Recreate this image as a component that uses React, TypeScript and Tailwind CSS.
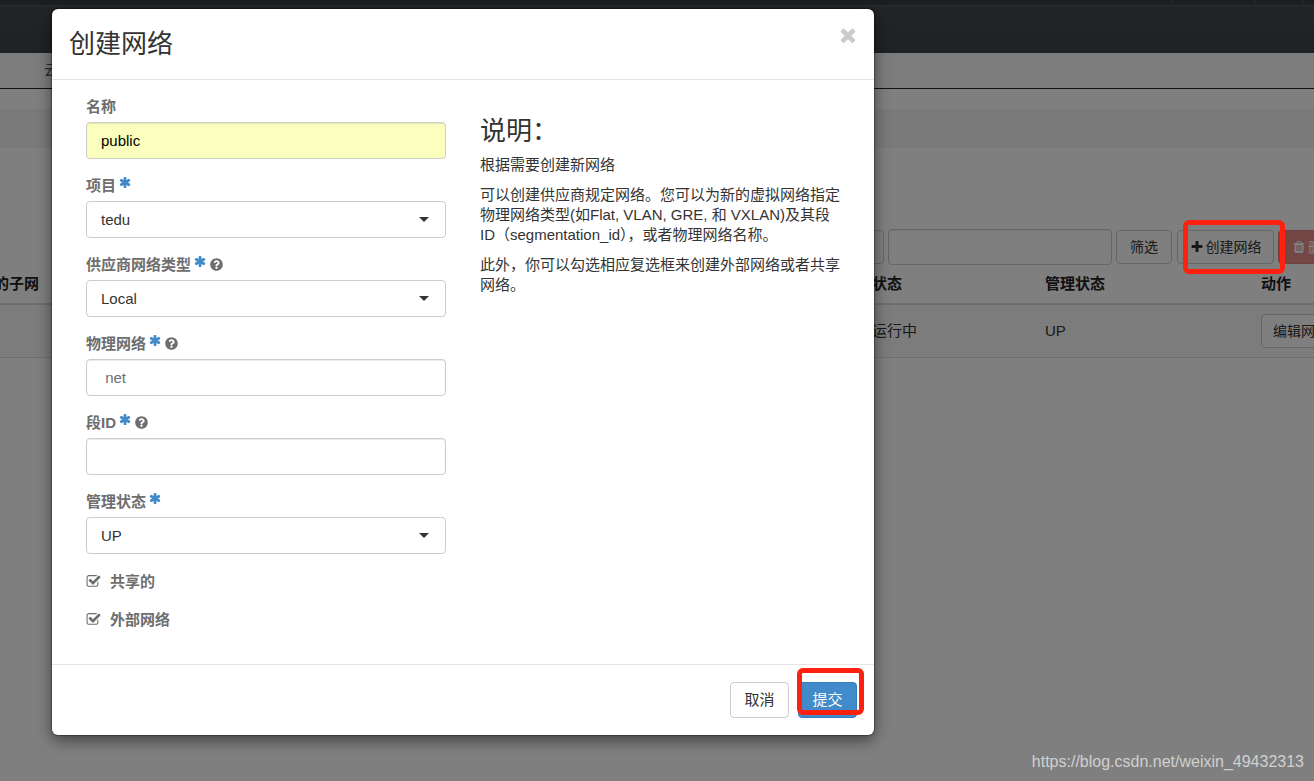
import React, { useState } from "react";
import { FaQuestionCircle } from "react-icons/fa";

const icons = {
  asterisk:
    "M1482 1050q46 26 59.5 77.5t-12.5 97.5l-64 110q-26 46-77.5 59.5t-97.5-12.5l-266-153v307q0 52-38 90t-90 38h-128q-52 0-90-38t-38-90v-307l-266 153q-46 26-97.5 12.5t-77.5-59.5l-64-110q-26-46-12.5-97.5t59.5-77.5l266-154-266-154q-46-26-59.5-77.5t12.5-97.5l64-110q26-46 77.5-59.5t97.5 12.5l266 153v-307q0-52 38-90t90-38h128q52 0 90 38t38 90v307l266-153q46-26 97.5-12.5t77.5 59.5l64 110q26 46 12.5 97.5t-59.5 77.5l-266 154z",
  checkSquare:
    "M1472 930v318q0 119-84.5 203.5t-203.5 84.5h-832q-119 0-203.5-84.5t-84.5-203.5v-832q0-119 84.5-203.5t203.5-84.5h832q63 0 117 25 15 7 18 23 3 17-9 29l-49 49q-10 10-23 10-3 0-9-2-23-6-45-6h-832q-66 0-113 47t-47 113v832q0 66 47 113t113 47h832q66 0 113-47t47-113v-254q0-13 9-22l64-64q10-10 23-10 6 0 12 3 20 8 20 29zm231-489l-814 814q-24 24-57 24t-57-24l-430-430q-24-24-24-57t24-57l110-110q24-24 57-24t57 24l263 263 647-647q24-24 57-24t57 24l110 110q24 24 24 57t-24 57z",
  square:
    "M1312 256h-832q-66 0-113 47t-47 113v832q0 66 47 113t113 47h832q66 0 113-47t47-113v-832q0-66-47-113t-113-47zm288 160v832q0 119-84.5 203.5t-203.5 84.5h-832q-119 0-203.5-84.5t-84.5-203.5v-832q0-119 84.5-203.5t203.5-84.5h832q119 0 203.5 84.5t84.5 203.5z",
  plus: "M1600 736v192q0 40-28 68t-68 28h-416v416q0 40-28 68t-68 28h-192q-40 0-68-28t-28-68v-416h-416q-40 0-68-28t-28-68v-192q0-40 28-68t68-28h416v-416q0-40 28-68t68-28h192q40 0 68 28t28 68v416h416q40 0 68 28t28 68z",
  trash:
    "M704 1376v-704q0-14-9-23t-23-9h-64q-14 0-23 9t-9 23v704q0 14 9 23t23 9h64q14 0 23-9t9-23zm256 0v-704q0-14-9-23t-23-9h-64q-14 0-23 9t-9 23v704q0 14 9 23t23 9h64q14 0 23-9t9-23zm256 0v-704q0-14-9-23t-23-9h-64q-14 0-23 9t-9 23v704q0 14 9 23t23 9h64q14 0 23-9t9-23zm-544-992h448l-48-117q-7-9-17-11h-317q-10 2-17 11zm928 32v64q0 14-9 23t-23 9h-96v948q0 83-47 143.5t-113 60.5h-832q-66 0-113-58.5t-47-141.5v-952h-96q-14 0-23-9t-9-23v-64q0-14 9-23t23-9h309l70-167q15-37 54-63t79-26h320q40 0 79 26t54 63l70 167h309q14 0 23 9t9 23z",
  times:
    "M1490 1322q0 40-28 68l-136 136q-28 28-68 28t-68-28l-294-294-294 294q-28 28-68 28t-68-28l-136-136q-28-28-28-68t28-68l294-294-294-294q-28-28-28-68t28-68l136-136q28-28 68-28t68 28l294 294 294-294q28-28 68-28t68 28l136 136q28 28 28 68t-28 68l-294 294 294 294q28 28 28 68z",
};

const Icon: React.FC<{ name: keyof typeof icons; className: string }> = ({
  name,
  className,
}) => (
  <svg
    viewBox="0 0 1792 1792"
    fill="currentColor"
    aria-hidden="true"
    className={className}
  >
    <path d={icons[name]} />
  </svg>
);

type Field = {
  id: string;
  label: string;
  required?: boolean;
  help?: boolean;
  options?: string[];
};

const fields: Field[] = [
  { id: "name", label: "名称" },
  { id: "project", label: "项目", required: true, options: ["tedu", "admin"] },
  {
    id: "type",
    label: "供应商网络类型",
    required: true,
    help: true,
    options: ["Local", "Flat", "VLAN", "GRE", "VXLAN"],
  },
  { id: "physical", label: "物理网络", required: true, help: true },
  { id: "segment", label: "段ID", required: true, help: true },
  { id: "state", label: "管理状态", required: true, options: ["UP", "DOWN"] },
];

const Page: React.FC = () => (
  <div>
    <div className="flex h-[5px] justify-end bg-[#383f43]">
      <div className="w-[83px] border-l border-[#50575b]" />
      <div className="w-12 border-l border-[#50575b]" />
      <div className="w-3 border-l border-[#50575b]" />
    </div>
    <header className="h-12 border-t border-[#545a5d] bg-linear-to-b from-[#464a4c] to-[#3e4549]" />
    <nav className="h-9 border-b border-[#222222] bg-[#f8f8f8] pl-11 leading-[34px] text-[#555555]">
      <a href="#">云计算</a>
    </nav>
    <div className="mt-5 h-[39px] bg-[#f5f5f5]" />

    <div className="-mr-16 -ml-3.5 pt-20">
      <div className="flex items-center justify-end gap-1 pt-px text-sm">
        <select
          aria-label="筛选条件"
          className="h-[34px] w-28 appearance-none rounded border border-[#cccccc] bg-white px-3"
        >
          <option>名称</option>
        </select>
        <input
          aria-label="筛选"
          className="h-9 w-56 rounded border border-[#cccccc] bg-white px-3 shadow-[inset_0_1px_1px_rgba(0,0,0,0.08)]"
        />
        <button className="h-[34px] w-14 rounded border border-[#cccccc] bg-white">
          筛选
        </button>
        <div className="relative ml-px">
          <button className="flex h-[34px] w-[97px] items-center justify-center gap-0.5 rounded border border-[#cccccc] bg-white">
            <Icon name="plus" className="size-[14px]" />
            创建网络
          </button>
          <span className="pointer-events-none absolute -top-2.5 left-1.5 z-30 h-[54px] w-[102px] rounded-md border-5 border-[#ff2010]" />
        </div>
        <button
          disabled
          className="flex h-[34px] w-[100px] items-center justify-center gap-0.5 rounded border border-[#d43f3a] bg-[#d9534f] text-white opacity-65"
        >
          <Icon name="trash" className="size-[14px]" />
          删除网络
        </button>
      </div>

      <table className="w-full table-fixed text-left">
        <thead>
          <tr className="h-[39px] border-b-2 border-[#dddddd] text-[#222222]">
            <th className="px-2">的子网</th>
            <th className="w-[173px] px-2">状态</th>
            <th className="w-[216px] px-2">管理状态</th>
            <th className="w-[125px] px-2">动作</th>
          </tr>
        </thead>
        <tbody>
          <tr className="h-[53px] border-b border-[#dddddd] bg-[#f9f9f9]">
            <td className="px-2" />
            <td className="px-2">运行中</td>
            <td className="px-2">UP</td>
            <td className="px-2">
              <button className="block h-[34px] w-[110px] rounded border border-[#cccccc] bg-white px-[11px] text-left text-sm">
                编辑网络
              </button>
            </td>
          </tr>
        </tbody>
      </table>
    </div>
  </div>
);

export default function App() {
  const [values, setValues] = useState<Record<string, string>>({
    name: "public",
    project: "tedu",
    type: "Local",
    physical: " net",
    segment: "",
    state: "UP",
  });
  const [flags, setFlags] = useState<Record<string, boolean>>({
    共享的: true,
    外部网络: true,
  });

  const update = (id: string, value: string) =>
    setValues((prev) => ({ ...prev, [id]: value }));

  return (
    <div className="relative min-h-screen overflow-hidden bg-white font-['Liberation_Sans','Noto_Sans_CJK_SC',sans-serif] text-[15px] leading-5 text-[#333333]">
      <div className="absolute inset-x-0 top-0">
        <Page />
      </div>
      <div className="absolute inset-0 z-10 bg-black/50" />

      <div className="relative z-20 pt-[9px] pb-[46px] pl-[52px]">
        <div
          role="dialog"
          aria-labelledby="title"
          className="w-full max-w-[822px] rounded-md bg-white shadow-[0_5px_15px_rgba(0,0,0,0.5),0_0_1px_1px_rgba(0,0,0,0.3)]"
        >
          <div className="flex h-[71px] items-center justify-between border-b border-[#e5e5e5] px-[17px]">
            <h3 id="title" className="text-[26px] leading-7">
              创建网络
            </h3>
            <button
              aria-label="关闭"
              className="-mr-0.5 mb-[18px] text-[#cccccc]"
            >
              <Icon name="times" className="size-[22px]" />
            </button>
          </div>

          <form>
            <div className="grid grid-cols-2 p-[17px]">
              <div className="px-[17px]">
                {fields.map((f) => (
                  <div key={f.id} className="mb-[17px]">
                    <label
                      htmlFor={f.id}
                      className="mb-[5px] flex h-5 items-center gap-[3px] font-bold text-[#6e6e6e]"
                    >
                      {f.label}
                      {f.required && (
                        <Icon
                          name="asterisk"
                          className="mb-2 size-[13px] text-[#428bca]"
                        />
                      )}
                      {f.help && (
                        <FaQuestionCircle className="mb-px size-[13px]" />
                      )}
                    </label>
                    {f.options ? (
                      <div className="relative">
                        <select
                          id={f.id}
                          value={values[f.id]}
                          onChange={(e) => update(f.id, e.target.value)}
                          className="block h-[37px] w-full appearance-none rounded border border-[#cccccc] bg-white px-3.5"
                        >
                          {f.options.map((o) => (
                            <option key={o}>{o}</option>
                          ))}
                        </select>
                        <svg
                          viewBox="0 0 10 5"
                          className="pointer-events-none absolute top-4 right-[17px] h-[5px] w-2.5"
                        >
                          <path d="M0 0h10L5 5z" fill="#333333" />
                        </svg>
                      </div>
                    ) : (
                      <input
                        id={f.id}
                        type="text"
                        value={values[f.id]}
                        onChange={(e) => update(f.id, e.target.value)}
                        className={`block h-[37px] w-full rounded border border-[#cccccc] px-3.5 shadow-[inset_0_1px_1px_rgba(0,0,0,0.08)] ${
                          f.id === "name"
                            ? "bg-[#faffbd] text-black"
                            : "bg-white text-[#6e6e6e]"
                        }`}
                      />
                    )}
                  </div>
                ))}
                {Object.entries(flags).map(([name, on]) => (
                  <label
                    key={name}
                    className="mb-[17px] flex h-[21px] items-center gap-[9px] font-bold text-[#6e6e6e]"
                  >
                    <input
                      type="checkbox"
                      checked={on}
                      onChange={() =>
                        setFlags((prev) => ({ ...prev, [name]: !on }))
                      }
                      className="sr-only"
                    />
                    <Icon
                      name={on ? "checkSquare" : "square"}
                      className="size-[15px]"
                    />
                    {name}
                  </label>
                ))}
              </div>

              <div className="px-[17px] pt-5">
                <h3 className="mb-2.5 text-[26px] leading-7">说明：</h3>
                <p className="mb-2.5">根据需要创建新网络</p>
                <p className="mb-2.5">
                  可以创建供应商规定网络。您可以为新的虚拟网络指定物理网络类型(如Flat,
                  VLAN, GRE, 和
                  VXLAN)及其段ID（segmentation_id），或者物理网络名称。
                </p>
                <p>此外，你可以勾选相应复选框来创建外部网络或者共享网络。</p>
              </div>
            </div>

            <div className="flex justify-end gap-[9px] border-t border-[#e5e5e5] p-[17px]">
              <button
                type="button"
                className="h-9 w-[59px] rounded border border-[#cccccc] bg-white"
              >
                取消
              </button>
              <div className="relative">
                <button
                  type="button"
                  className="h-9 w-[59px] rounded border border-[#357ebd] bg-[#428bca] text-white"
                >
                  提交
                </button>
                <span className="pointer-events-none absolute -top-3.5 -left-px h-[47px] w-[67px] rounded-md border-5 border-[#ff2010]" />
              </div>
            </div>
          </form>
        </div>
      </div>

      <div className="absolute right-2.5 bottom-[9px] z-30 text-base leading-5 text-[#d0d0d0]">
        https://blog.csdn.net/weixin_49432313
      </div>
    </div>
  );
}
